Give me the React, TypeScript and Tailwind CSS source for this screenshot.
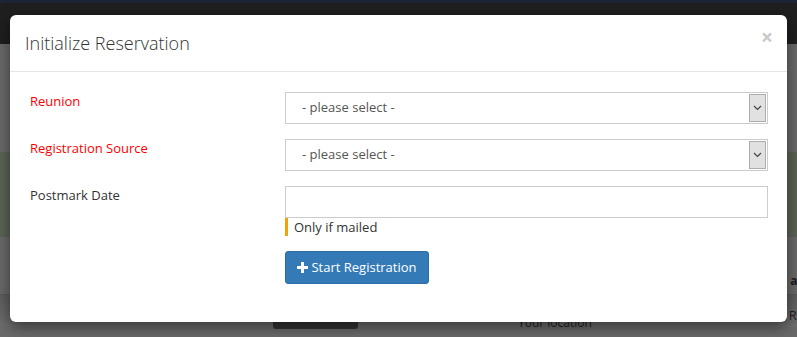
import { useState } from "react";

const font = { fontFamily: '"Open Sans", "Liberation Sans", sans-serif' };

function SelectBox({ value }: { value: string }) {
    return (
        <div className="flex h-[32px] items-stretch border border-[#cccccc] bg-white">
            <div className="flex flex-1 items-center pl-[16px] text-[13px] text-[#555555]">{value}</div>
            <div className="my-px mr-px flex w-[17px] items-center justify-center border border-[#adadad] bg-[#e1e1e1]">
                <svg width="9" height="6" viewBox="0 0 9 6" fill="none">
                    <path d="M1 1l3.5 3.5L8 1" stroke="#444" strokeWidth="1.2" />
                </svg>
            </div>
        </div>
    );
}

export default function App() {
    const [postmark, setPostmark] = useState("");

    return (
        <div className="relative h-[337px] w-[797px] overflow-hidden bg-[#6a6a6a]" style={font}>
            {/* page behind the backdrop */}
            <div className="h-[3px] bg-[#1c2538]" />
            <div className="h-[41px] bg-[#1f1f1f]" />
            <div className="h-[108px]" />
            <div className="flex h-[85px]">
                <div className="w-[10px] bg-[#5b6456]" />
                <div className="flex-1" />
                <div className="w-[10px] bg-[#5b6456]" />
            </div>
            <div className="flex h-[58px] items-end justify-end border-b border-[#5a5a5a] pb-[4px] text-[12px] font-bold text-[#1a1a1a]">
                <span className="-mr-[4px]">a,</span>
            </div>
            <div className="flex h-[32px] items-start bg-gradient-to-b from-[#5e5e5e] to-[#6e6e6e] pl-[273px]">
                <div className="mt-[19px] h-[15px] w-[85px] rounded-[3px] bg-[#333333]" />
                <div className="ml-[160px] mt-[19px] text-[12px] text-[#222]">Your location</div>
                <div className="ml-auto mt-[11px] -mr-[6px] text-[13px] text-[#222]">Rc</div>
            </div>

            {/* modal */}
            <div className="absolute left-[10px] top-[15px] w-[777px] rounded-[6px] bg-white shadow-[0_5px_15px_rgba(0,0,0,0.5)]">
                <div className="flex items-center justify-between border-b border-[#e5e5e5] px-[15px] py-[15px]">
                    <h4 className="text-[18px] font-light leading-[26px] text-[#333333]">Initialize Reservation</h4>
                    <button className="-mr-[1px] -mt-[12px] text-[21px] font-bold leading-none text-[#c9c9c9]">×</button>
                </div>

                <div className="flex flex-col gap-[15px] pb-[38px] pl-[20px] pr-[19px] pt-[20px] text-[13px]">
                    <div className="flex">
                        <label className="w-[255px] text-[#ff0000]">Reunion</label>
                        <div className="flex-1">
                            <SelectBox value="- please select -" />
                        </div>
                    </div>

                    <div className="flex">
                        <label className="w-[255px] text-[#ff0000]">Registration Source</label>
                        <div className="flex-1">
                            <SelectBox value="- please select -" />
                        </div>
                    </div>

                    <div className="flex">
                        <label className="w-[255px] text-[#333333]">Postmark Date</label>
                        <div className="flex-1">
                            <input
                                value={postmark}
                                onChange={(e) => setPostmark(e.target.value)}
                                className="block h-[32px] w-full border border-[#cccccc] px-[12px] text-[13px] outline-none"
                            />
                            <div className="border-l-[3px] border-[#f0a30a] pl-[6px] text-[13px] leading-[18px] text-[#333333]">
                                Only if mailed
                            </div>
                        </div>
                    </div>

                    <div className="flex">
                        <div className="w-[255px]" />
                        <button className="flex h-[33px] w-[144px] items-center justify-center gap-[3px] rounded-[3px] border border-[#2e6da4] bg-[#337ab7] text-[13px] text-white">
                            <svg width="11" height="11" viewBox="0 0 11 11">
                                <path d="M4 0h3v4h4v3H7v4H4V7H0V4h4z" fill="#fff" />
                            </svg>
                            Start Registration
                        </button>
                    </div>
                </div>
            </div>
        </div>
    );
}
